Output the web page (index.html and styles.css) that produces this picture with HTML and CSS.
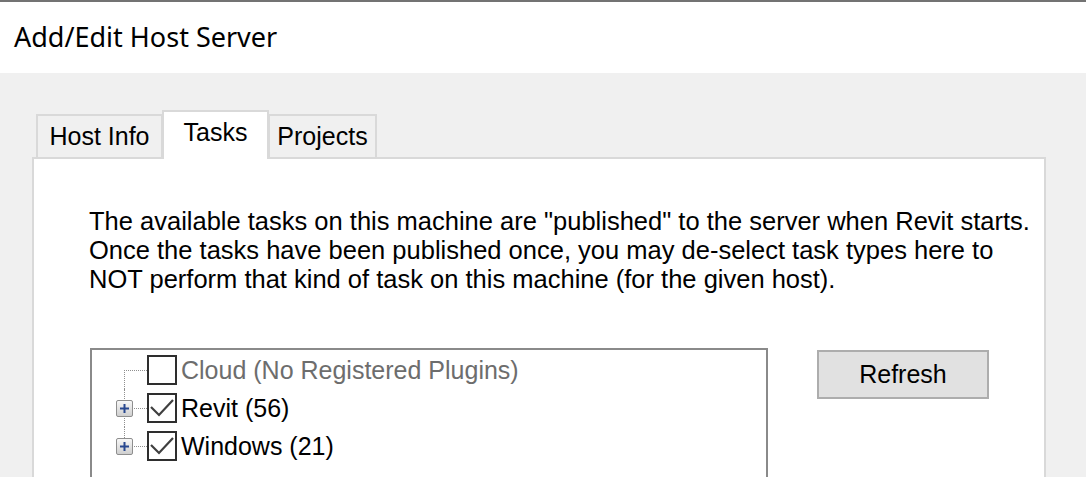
FILE: index.html
```html
<!DOCTYPE html>
<html>
<head>
<meta charset="utf-8">
<title>Add/Edit Host Server</title>
<link rel="stylesheet" href="styles.css">
</head>
<body>
<div class="window">
  <div class="titlebar"><span class="title">Add/Edit Host Server</span></div>
  <div class="client">
    <div class="tabstrip">
      <div class="tab tab-host">Host Info</div>
      <div class="tab tab-tasks">Tasks</div>
      <div class="tab tab-projects">Projects</div>
    </div>
    <div class="panel">
      <p class="desc">The available tasks on this machine are "published" to the server when Revit starts.<br>Once the tasks have been published once, you may de-select task types here to<br>NOT perform that kind of task on this machine (for the given host).</p>
      <div class="row">
        <div class="tree">
          <div class="node node-first">
            <div class="exp"></div>
            <div class="cb"></div>
            <span class="label label-disabled">Cloud (No Registered Plugins)</span>
          </div>
          <div class="node node-mid">
            <div class="exp">
              <span class="plus"><svg width="11" height="11" viewBox="0 0 11 11"><path d="M1 5.5H10M5.5 1V10" stroke="#27478f" stroke-width="2" fill="none"/></svg></span>
            </div>
            <div class="cb"><svg width="26" height="26" viewBox="0 0 26 26"><polyline points="2,12 10,20 24,5" fill="none" stroke="#3f3f3f" stroke-width="2.2"/></svg></div>
            <span class="label">Revit (56)</span>
          </div>
          <div class="node node-last">
            <div class="exp">
              <span class="plus"><svg width="11" height="11" viewBox="0 0 11 11"><path d="M1 5.5H10M5.5 1V10" stroke="#27478f" stroke-width="2" fill="none"/></svg></span>
            </div>
            <div class="cb"><svg width="26" height="26" viewBox="0 0 26 26"><polyline points="2,12 10,20 24,5" fill="none" stroke="#3f3f3f" stroke-width="2.2"/></svg></div>
            <span class="label">Windows (21)</span>
          </div>
        </div>
        <button class="refresh">Refresh</button>
      </div>
    </div>
  </div>
</div>
</body>
</html>
```

FILE: styles.css
```css
html, body {
  margin: 0;
  height: 100%;
  overflow: hidden;
}

body {
  background: #f0f0f0;
  font-family: "Liberation Sans", Arial, sans-serif;
  color: #000;
}

.titlebar {
  border-top: 2px solid #737373;
  box-sizing: border-box;
  height: 73px;
  background: #fff;
  padding: 16px 0 0 14px;
  font-family: "Noto Sans", "Open Sans", sans-serif;
  font-size: 27px;
  line-height: 37px;
}

.client {
  padding: 37px 40px 0 32px;
}

.tabstrip {
  display: flex;
  align-items: flex-end;
  height: 47px;
  padding-left: 4px;
}

.tab {
  box-sizing: border-box;
  height: 43px;
  border: 2px solid #d9d9d9;
  border-bottom: 0;
  background: #f0f0f0;
  display: flex;
  align-items: center;
  justify-content: center;
  font-size: 25px;
}

.tab-host {
  width: 127px;
}

.tab-tasks {
  width: 107px;
  height: 49px;
  margin-left: -1px;
  margin-bottom: -2px;
  padding-bottom: 6px;
  background: #fff;
  position: relative;
  z-index: 1;
}

.tab-projects {
  width: 109px;
  margin-left: -1px;
}

.panel {
  box-sizing: border-box;
  background: #fff;
  border: 2px solid #d9d9d9;
  border-bottom: 0;
  height: 320px;
  padding: 48px 0 0 55px;
}

.desc {
  margin: 0;
  font-size: 25.5px;
  line-height: 29px;
}

.row {
  display: flex;
  align-items: flex-start;
  margin-top: 54px;
  margin-left: 1px;
}

.tree {
  box-sizing: border-box;
  width: 678px;
  height: 129px;
  border: 2px solid #8a8a8a;
  border-bottom: 0;
  padding-top: 1px;
}

.node {
  display: flex;
  align-items: center;
  height: 38px;
}

.exp {
  position: relative;
  width: 55px;
  height: 38px;
  display: flex;
  align-items: center;
}

.exp::before {
  content: "";
  position: absolute;
  left: 32px;
  right: 0;
  top: 19px;
  border-top: 1px dotted #8f8f8f;
}

.exp::after {
  content: "";
  position: absolute;
  left: 32px;
  border-left: 1px dotted #8f8f8f;
  top: 0;
  bottom: 0;
}

.node-first .exp::after {
  top: 19px;
}

.node-last .exp::after {
  bottom: 19px;
}

.plus {
  position: relative;
  z-index: 1;
  box-sizing: border-box;
  width: 17px;
  height: 17px;
  margin-left: 24px;
  border: 1px solid #8e8e8e;
  border-radius: 2px;
  background: linear-gradient(#f7f7f7, #cfcfcf);
  display: flex;
  align-items: center;
  justify-content: center;
}

.plus svg {
  display: block;
}

.cb {
  box-sizing: border-box;
  width: 30px;
  height: 30px;
  border: 2px solid #2e2e2e;
  background: #fff;
  flex: none;
}

.cb svg {
  display: block;
}

.label {
  margin-left: 4px;
  font-size: 25px;
  white-space: nowrap;
}

.label-disabled {
  color: #6d6d6d;
}

.refresh {
  box-sizing: border-box;
  width: 172px;
  height: 49px;
  margin: 2px 0 0 49px;
  background: #e1e1e1;
  border: 2px solid #adadad;
  font-family: "Liberation Sans", Arial, sans-serif;
  font-size: 25px;
  color: #000;
  padding: 0;
}
```
